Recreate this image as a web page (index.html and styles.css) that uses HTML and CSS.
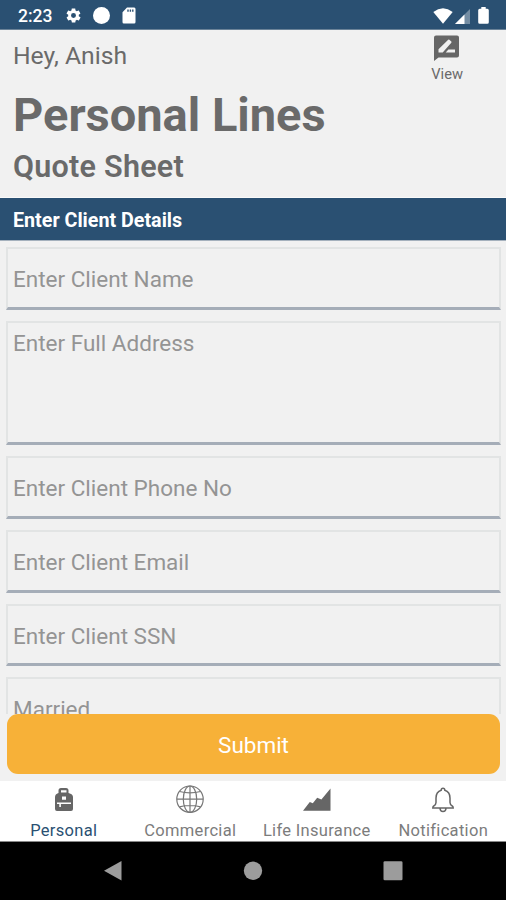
FILE: index.html
```html
<!DOCTYPE html>
<html lang="en">
<head>
<meta charset="utf-8">
<title>Personal Lines Quote Sheet</title>
<link rel="stylesheet" href="styles.css">
</head>
<body>
<div class="screen">
  <div class="status">
    <span class="time">2:23</span>
    <svg class="gear" viewBox="0 0 24 24"><path fill-rule="evenodd" d="M19.4 13c0-.3.1-.6.1-1s0-.7-.1-1l2.1-1.600c.2-.2.2-.4.1-.6l-2-3.500c-.1-.2-.4-.3-.6-.2l-2.500 1c-.5-.4-1.100-.7-1.700-1L14.500 2.400c0-.2-.2-.4-.5-.4h-4c-.3 0-.5.2-.5.4l-.4 2.700c-.6.2-1.200.6-1.700 1l-2.500-1c-.2-.1-.5 0-.6.2l-2 3.500c-.1.2-.1.5.1.6L4.600 11c0 .3-.1.700-.1 1s0 .7.100 1l-2.100 1.600c-.2.2-.2.4-.1.6l2 3.500c.1.2.4.300.600.200l2.500-1c.5.4 1.100.7 1.700 1l.4 2.700c0 .2.200.4.500.4h4c.3 0 .5-.2.500-.4l.4-2.700c.6-.3 1.200-.6 1.700-1l2.500 1c.2.1.500 0 .6-.2l2-3.500c.1-.2.1-.5-.1-.6L19.400 13zM12 15.500a3.500 3.500 0 1 1 0-7 3.500 3.500 0 0 1 0 7z"/></svg>
    <span class="dot"></span>
    <svg class="card" viewBox="0 0 14 17"><path fill-rule="evenodd" d="M5 .5h7.200Q13.500.5 13.500 2v13q0 1.500-1.300 1.500H1.800Q.5 16.500.5 15V5.200zM5.300 2.500v2.300h1.400V2.500zM7.700 2.500v2.300h1.400V2.500zM10.100 2.500v2.300h1.400V2.500z"/></svg>
    <span class="grow"></span>
    <svg class="wifi" viewBox="0 0 20 16"><path d="M.3 4Q10-3.400 19.700 4L10 15.700z"/></svg>
    <svg class="signal" viewBox="0 0 15 15"><path d="M15 0v15H0z" opacity=".35"/><path d="M9.500 5.500V15H0z"/></svg>
    <svg class="battery" viewBox="0 0 11 17"><path d="M3.300 0h4.400v1.700h1.600q1.500 0 1.500 1.500v12.100q0 1.500-1.500 1.500H1.700q-1.500 0-1.500-1.500V3.200q0-1.500 1.500-1.500h1.600z"/></svg>
  </div>
  <header class="head">
    <div class="titles">
      <div class="hello">Hey, Anish</div>
      <h1>Personal Lines</h1>
      <h2>Quote Sheet</h2>
    </div>
    <div class="view">
      <svg viewBox="0 0 26 26"><path fill-rule="evenodd" d="M2.500.5h21Q25.500.5 25.500 2.500v18q0 2-2 2H5L.5 26V2.500Q.5.500 2.500.5zM5 17.500h4.200l8.600-9.700q.5-.6 0-1.200l-1.900-1.900q-.6-.5-1.200 0L5 14.300zM12.200 17.500h9.300v-3h-6.600z"/></svg>
      <span>View</span>
    </div>
  </header>
  <div class="section">Enter Client Details</div>
  <main class="form">
    <div class="field">Enter Client Name</div>
    <div class="field tall">Enter Full Address</div>
    <div class="field">Enter Client Phone No</div>
    <div class="field">Enter Client Email</div>
    <div class="field">Enter Client SSN</div>
    <div class="field">Married</div>
  </main>
  <div class="action"><div class="submit">Submit</div></div>
  <nav class="tabs">
    <div class="tab active">
      <svg viewBox="0 0 30 30"><path fill-rule="evenodd" d="M9.500 8V5.500q0-2.500 2.500-2.500h5q2.500 0 2.500 2.500V8Q24 9 24 12v12q0 2-2 2H8q-2 0-2-2V12q0-3 3.500-4zM12 7.500h5.500V5.300H12zM13 11.500v3.300h4v-3.300zM8 17.500v1.600h2.300v3h1.600v-3H22v-1.600z"/></svg>
      <span>Personal</span>
    </div>
    <div class="tab">
      <svg class="line" viewBox="0 0 30 30"><circle cx="15" cy="14.200" r="13.200"/><ellipse cx="15" cy="14.200" rx="6.700" ry="13.200"/><path d="M15 1v26.400M1.800 14.200h26.400M4.500 6.500Q15 9.300 25.500 6.500M4.500 21.900Q15 19.100 25.500 21.900"/></svg>
      <span>Commercial</span>
    </div>
    <div class="tab">
      <svg viewBox="0 0 30 30"><path d="M1 25.700 7.800 17l3 1.300 4.400-5.600 4.200 1.900L28.500 3.500v22.200z"/></svg>
      <span>Life Insurance</span>
    </div>
    <div class="tab">
      <svg class="line bell" viewBox="0 0 30 30"><path d="M13.200 5.200Q13.200 3.300 15 3.300t1.800 1.900Q22 6.700 22 13v4.500q0 2.500 2.500 3.700.7.500.7 1.900H4.800q0-1.400.7-1.900Q8 20 8 17.500V13q0-6.300 5.200-7.800zM12 23.300q.2 3.200 3 3.200t3-3.200"/></svg>
      <span>Notification</span>
    </div>
  </nav>
  <div class="sysnav">
    <svg viewBox="0 0 20 22"><path d="M18.500 1v19.600L1 10.800z"/></svg>
    <svg viewBox="0 0 20 22"><circle cx="10" cy="10.800" r="9.200"/></svg>
    <svg viewBox="0 0 20 22"><rect x=".5" y="1.300" width="19" height="19" rx="1.300"/></svg>
  </div>
</div>
</body>
</html>
```

FILE: styles.css
```css
* { box-sizing: border-box; }
body { margin: 0; font-family: Roboto, "Liberation Sans", sans-serif; background: #f1f1f1; }
svg { display: block; flex: none; }
.screen { width: 506px; height: 900px; display: flex; flex-direction: column; overflow: hidden; background: #f1f1f1; }

.status { flex: none; height: 30px; background: #2a5072; border-bottom: 1px solid #6b8398; display: flex; align-items: center; padding: 2px 17px 0 18px; color: #fff; fill: #fff; }
.time { width: 47px; font-size: 17.500px; font-weight: 500; line-height: 20px; }
.gear { width: 17px; height: 17px; }
.dot { width: 17px; height: 17px; border-radius: 50%; background: #fff; margin: 0 12px 0 11px; }
.card { width: 14px; height: 17px; }
.grow { flex: 1; }
.wifi { width: 20px; height: 16px; }
.signal { width: 15px; height: 15px; margin: 1px 8px 0 2px; }
.battery { width: 11px; height: 17px; }

.head { flex: none; height: 168px; display: flex; justify-content: space-between; padding: 0 43px 0 13px; color: #6a6a6a; border-bottom: 1px solid #fafafa; }
.hello { margin-top: 11px; font-size: 24.700px; line-height: 30px; }
h1 { margin: 12px 0 0; font-size: 47px; line-height: 63px; font-weight: 700; }
h2 { margin: 3px 0 0; font-size: 30.500px; line-height: 36px; font-weight: 600; letter-spacing: .25px; }
.view { display: flex; flex-direction: column; align-items: flex-start; padding-top: 5px; font-size: 14.700px; line-height: 18px; fill: #666; }
.view svg { width: 27px; height: 26px; margin: 0 0 4px 2px; }

.section { flex: none; height: 43px; background: #2a5072; border-bottom: 1px solid #a5b1bd; color: #fff; font-size: 19.700px; font-weight: 700; line-height: 45px; padding-left: 13px; }

.form { flex: none; height: 473px; overflow: hidden; padding: 6px 5px 0 6px; display: flex; flex-direction: column; gap: 11px; }
.field { flex: none; height: 62.700px; border: 2px solid #e2e4e4; border-bottom: 3px solid #a5adb8; padding-left: 5px; font-size: 22.500px; line-height: 60px; color: #949494; }
.field.tall { height: 124.500px; line-height: 41px; }

.action { flex: none; height: 67px; padding: 0 6px 7px 7px; }
.submit { height: 60px; border-radius: 11px; background: #f7b138; color: #fff; font-size: 22.500px; line-height: 63px; text-align: center; }

.tabs { flex: none; height: 61px; background: #fff; display: grid; grid-template-columns: repeat(4, 1fr); border-bottom: 1px solid #888; }
.tab { display: flex; flex-direction: column; align-items: center; padding: 4px 0 0 1px; font-size: 16.500px; letter-spacing: .32px; line-height: 20px; color: #7c7c7c; fill: #666; white-space: nowrap; }
.tab svg { width: 30px; height: 30px; margin: 0 0 6px; }
.tab.active { color: #2a5072; }
.tab .line { fill: none; stroke: #777; stroke-width: 1.200; }
.tab .bell { stroke: #666; stroke-width: 1.500; }

.sysnav { flex: 1; background: #000; display: flex; justify-content: space-between; align-items: center; padding: 0 103px; fill: #9c9c9c; }
.sysnav svg { width: 20px; height: 22px; }
```
